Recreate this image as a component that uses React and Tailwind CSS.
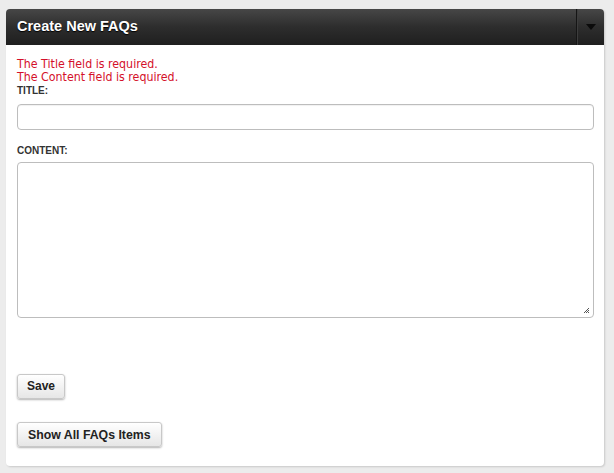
export default function App() {
  return (
    <div className="min-h-[473px] w-[614px] bg-[#ececec] pt-[9px] pl-[6px]" style={{ fontFamily: '"DejaVu Sans Condensed", "Liberation Sans", sans-serif' }}>
      <div className="w-[598px] h-[457px] bg-white rounded-[4px] shadow-[1px_1px_2px_rgba(0,0,0,0.15)] flex flex-col">
        <div className="h-[36px] flex items-stretch rounded-t-[4px] bg-gradient-to-b from-[#474747] via-[#2d2d2d] to-[#1f1f1f]">
          <div className="flex-1 flex items-center pl-[11px] text-white font-bold text-[14.5px] [text-shadow:0_1px_1px_#000]" style={{ fontFamily: '"Liberation Sans", sans-serif' }}>
            Create New FAQs
          </div>
          <div className="w-[28px] border-l border-[#151515] shadow-[inset_1px_0_0_#3d3d3d] flex items-center justify-center">
            <svg width="10" height="6" viewBox="0 0 10 6"><path d="M0 0h10L5 6z" fill="#0b0b0b" /></svg>
          </div>
        </div>
        <div className="px-[11px] pt-[13px] flex flex-col">
          <div className="text-[#d4102a] text-[12.3px] leading-[13px]">The Title field is required.</div>
          <div className="text-[#d4102a] text-[12.3px] leading-[13px]">The Content field is required.</div>
          <div className="text-[#333] text-[10px] font-bold leading-[12px] mt-[1px]" style={{ fontFamily: '"Liberation Sans", sans-serif' }}>TITLE:</div>
          <div className="mt-[7px] h-[26px] w-[577px] border border-[#bdbdbd] rounded-[4px] shadow-[inset_0_1px_1px_rgba(0,0,0,0.06)]" />
          <div className="mt-[15px] text-[#333] text-[10px] font-bold leading-[12px]" style={{ fontFamily: '"Liberation Sans", sans-serif' }}>CONTENT:</div>
          <div className="relative mt-[5px] h-[156px] w-[577px] border border-[#bdbdbd] rounded-[4px]">
            <svg className="absolute right-[3px] bottom-[3px]" width="7" height="7" viewBox="0 0 7 7">
              <path d="M6 1L1 6M6 3L3 6M6 5L5 6" stroke="#555" strokeWidth="1" />
            </svg>
          </div>
          <div className="mt-[55px]">
            <button className="h-[25px] px-[9px] rounded-[3px] border border-[#c8c8c8] bg-gradient-to-b from-white to-[#e6e6e6] shadow-[0_1px_2px_rgba(0,0,0,0.3)] text-[12px] font-bold text-[#222]" style={{ fontFamily: '"Liberation Sans", sans-serif' }}>Save</button>
          </div>
          <div className="mt-[23px]">
            <button className="h-[25px] px-[10px] rounded-[3px] border border-[#c8c8c8] bg-gradient-to-b from-white to-[#e6e6e6] shadow-[0_1px_2px_rgba(0,0,0,0.3)] text-[12.3px] font-bold text-[#222]" style={{ fontFamily: '"Liberation Sans", sans-serif' }}>Show All FAQs Items</button>
          </div>
        </div>
      </div>
    </div>
  );
}
